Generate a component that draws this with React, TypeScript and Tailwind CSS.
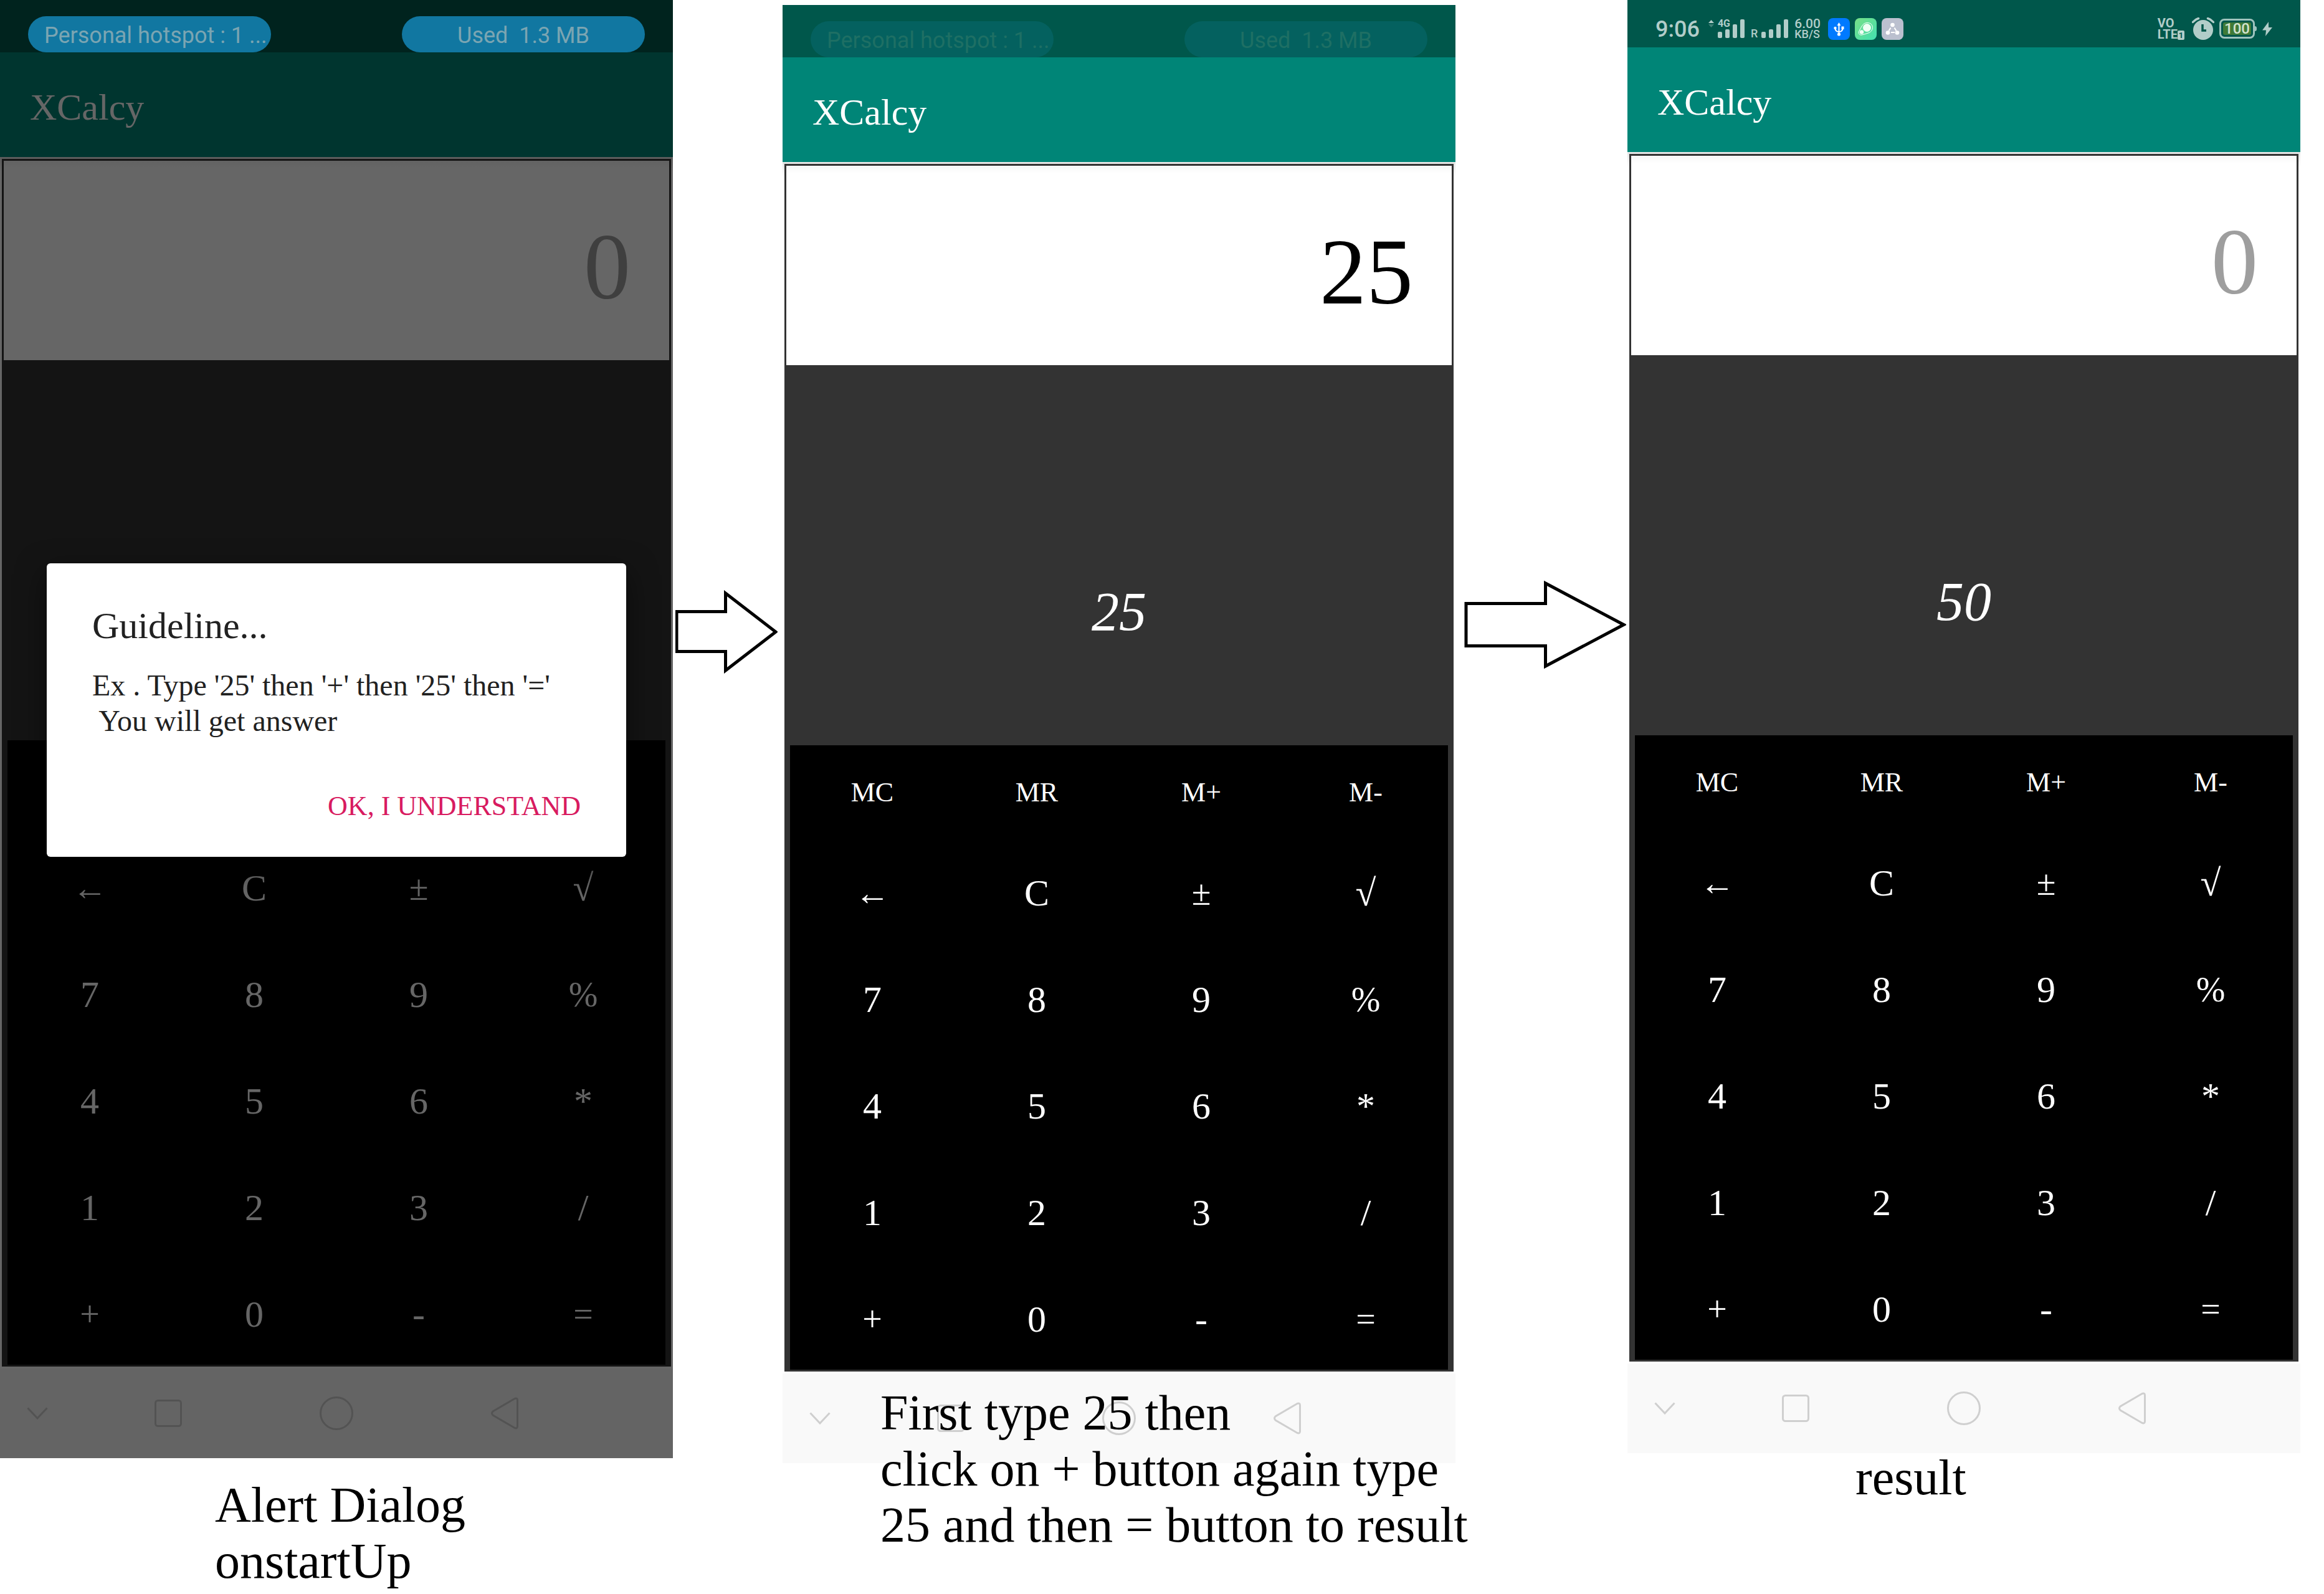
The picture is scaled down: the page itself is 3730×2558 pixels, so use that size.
import React from "react";

type Key = { label: string; name: string; size?: string };

const MEMORY: Key[] = [
  { label: "MC", name: "Memory clear" },
  { label: "MR", name: "Memory recall" },
  { label: "M+", name: "Memory add" },
  { label: "M-", name: "Memory subtract" },
];

const KEYS: Key[] = [
  { label: "←", name: "Backspace", size: "text-[56px]" },
  { label: "C", name: "Clear" },
  { label: "±", name: "Change sign", size: "text-[56px]" },
  { label: "√", name: "Square root" },
  { label: "7", name: "7" },
  { label: "8", name: "8" },
  { label: "9", name: "9" },
  { label: "%", name: "Percent", size: "text-[56px]" },
  { label: "4", name: "4" },
  { label: "5", name: "5" },
  { label: "6", name: "6" },
  { label: "*", name: "Multiply" },
  { label: "1", name: "1" },
  { label: "2", name: "2" },
  { label: "3", name: "3" },
  { label: "/", name: "Divide" },
  { label: "+", name: "Add", size: "text-[56px]" },
  { label: "0", name: "0" },
  { label: "-", name: "Subtract" },
  { label: "=", name: "Equals", size: "text-[56px]" },
];

const SERIF = "font-['Liberation_Serif',serif]";

function Pills({ faded }: { faded?: boolean }) {
  const tone = faded ? "bg-[#04615f] text-[#1e6f64]" : "bg-[#1177a1] text-[#7ba5b2]";
  return (
    <div className="relative z-20 flex h-[84px] items-end justify-between px-[45px] font-['Roboto',sans-serif] text-[36px]">
      <div className={`flex h-[58px] w-[390px] items-center whitespace-pre rounded-full pl-[26px] pt-1 leading-[40px] ${tone}`}>
        Personal hotspot : 1 ...
      </div>
      <div className={`flex h-[58px] w-[390px] items-center justify-center whitespace-pre rounded-full pt-1 leading-[40px] ${tone}`}>
        {"Used  1.3 MB"}
      </div>
    </div>
  );
}

function SignalBars() {
  return (
    <svg width="43" height="30" viewBox="0 0 43 30" fill="currentColor" aria-hidden="true">
      <rect x="0" y="20" width="7" height="10" rx="2" />
      <rect x="12" y="16" width="7" height="14" rx="2" />
      <rect x="24" y="8" width="7" height="22" rx="2" />
      <rect x="36" y="0" width="7" height="30" rx="2" />
    </svg>
  );
}

function StatusIcons() {
  return (
    <div className="flex h-[76px] items-center justify-between px-[45px] pt-4 font-['Roboto',sans-serif] font-medium text-[#b2cdc9]">
      <div className="flex items-center">
        <span className="pt-0.5 text-[36px] leading-[40px]">9:06</span>
        <svg className="ml-3.5 mb-4" width="9" height="12" viewBox="0 0 9 12" aria-hidden="true">
          <path d="M4.5 0 9 5H0z" fill="currentColor" />
          <path d="M4.5 12 0 7h9z" fill="#3f8177" />
        </svg>
        <div className="relative ml-1.5">
          <SignalBars />
          <span className="absolute left-0 top-0 text-[16px] font-bold leading-[13px]">4G</span>
        </div>
        <span className="ml-2.5 mt-4 text-[18px] leading-[16px]">R</span>
        <div className="ml-1.5">
          <SignalBars />
        </div>
        <div className="ml-2.5 flex flex-col">
          <span className="text-[21px] leading-[18px]">6.00</span>
          <span className="text-[18px] leading-[16px]">KB/S</span>
        </div>
        <svg className="ml-3" width="35" height="35" viewBox="0 0 35 35" aria-label="USB">
          <rect width="35" height="35" rx="8" fill="#007aff" />
          <g stroke="#fff" strokeWidth="2" fill="none">
            <path d="M17.500 10V26M11.500 16c0 4 2 6 6 6s6-2 6-6" />
          </g>
          <path d="M17.500 7l3 5h-6z" fill="#fff" />
          <circle cx="17.500" cy="26" r="2.600" fill="#fff" />
          <circle cx="11.500" cy="16" r="2.200" fill="#fff" />
          <rect x="21.500" y="13.500" width="4" height="4.500" fill="#fff" />
        </svg>
        <svg className="ml-2" width="35" height="35" viewBox="0 0 35 35" aria-label="Cleaner">
          <defs>
            <linearGradient id="mint" x1="0" y1="0" x2="1" y2="1">
              <stop offset="0" stopColor="#78e086" />
              <stop offset="1" stopColor="#42dfb1" />
            </linearGradient>
          </defs>
          <rect width="35" height="35" rx="8" fill="url(#mint)" />
          <path
            d="M13 10.500C17 6 26 6.500 28 12.500C29.500 17 27 21.500 23 23.500C19 25 15 26 11.500 27C7 28 5 24 7 20.500C9 17 10.500 13.500 13 10.500Z"
            fill="none"
            stroke="#fff"
            strokeWidth="1"
          />
          <circle cx="19.500" cy="15.500" r="6.500" fill="#f0fff5" />
          <circle cx="11" cy="22.500" r="3.200" fill="#f0fff5" />
        </svg>
        <svg className="ml-2" width="35" height="35" viewBox="0 0 35 35" aria-label="Share">
          <rect width="35" height="35" rx="8" fill="#bbc0cf" />
          <g fill="#fff" stroke="none">
            <circle cx="17.500" cy="11" r="3.300" />
            <circle cx="10" cy="23.500" r="3.300" />
            <circle cx="25" cy="23.500" r="3.300" />
          </g>
          <path d="M14.500 15.500l-3 5M20.500 15.500l3 5M15 23h6" stroke="#fff" strokeWidth="2" />
        </svg>
      </div>
      <div className="flex items-center">
        <div className="flex flex-col font-bold">
          <span className="text-[20px] leading-[17px]">VO</span>
          <span className="flex items-end text-[20px] leading-[18px]">
            LTE
            <span className="h-[15px] w-[11px] rounded-[2px] bg-[#b2cdc9] text-center text-[13px] leading-[15px] text-[#00574b]">1</span>
          </span>
        </div>
        <svg className="ml-3" width="36" height="36" viewBox="0 0 36 36" aria-label="Alarm">
          <circle cx="18" cy="20" r="16" fill="currentColor" />
          <path d="M1.500 7.500C4 4.500 7 2.500 10.500 1.500M34.500 7.500C32 4.500 29 2.500 25.500 1.500" stroke="currentColor" strokeWidth="3.500" strokeLinecap="round" fill="none" />
          <path d="M17 11v10h6" stroke="#00574b" strokeWidth="3.500" fill="none" />
        </svg>
        <div className="ml-2 flex items-center">
          <div className="flex h-8 w-[57px] items-center justify-center rounded-[8px] border-[3px] border-[#9fc3bd]">
            <span className="flex h-[20px] w-[45px] items-center justify-center rounded-[3px] bg-[#3f7a37] text-[24px] leading-[20px] text-[#d3e2cf]">100</span>
          </div>
          <span className="h-2 w-[3px] rounded-r bg-[#9fc3bd]" />
        </div>
        <svg className="ml-[9px]" width="16" height="23" viewBox="0 0 16 23" fill="currentColor" aria-label="Charging">
          <path d="M10 0 0 13.500h6L5 23 16 9H10z" />
        </svg>
      </div>
    </div>
  );
}

function NavBar() {
  const cell = "flex items-center justify-center";
  return (
    <nav className="grid h-36 grid-cols-[120fr_300fr_240fr_300fr_120fr] bg-[#f9f9f9] text-[#cfcfcf]">
      <button className={cell} aria-label="Hide navigation bar">
        <svg width="34" height="20" viewBox="0 0 34 20" fill="none" stroke="currentColor" strokeWidth="3">
          <path d="M1.500 1.500 17 18 32.500 1.500" />
        </svg>
      </button>
      <button className={cell} aria-label="Recent apps">
        <svg width="44" height="44" viewBox="0 0 44 44" fill="none" stroke="currentColor" strokeWidth="3">
          <rect x="1.500" y="1.500" width="41" height="41" rx="4" />
        </svg>
      </button>
      <button className={cell} aria-label="Home">
        <svg width="54" height="54" viewBox="0 0 54 54" fill="none" stroke="currentColor" strokeWidth="3">
          <circle cx="27" cy="27" r="25.500" />
        </svg>
      </button>
      <button className={cell} aria-label="Back">
        <svg width="44" height="52" viewBox="0 0 44 52" fill="none" stroke="currentColor" strokeWidth="3">
          <path d="M38 2.500 3 23Q0 26 3 29L38 49.500Q42.500 51 42.500 47V5Q42.500 1 38 2.500Z" />
        </svg>
      </button>
    </nav>
  );
}

function Phone({
  status,
  value,
  result,
  dialog,
}: {
  status: React.ReactNode;
  value: string;
  result: string;
  dialog?: React.ReactNode;
}) {
  return (
    <section className={`relative bg-[#00574b] ${SERIF}`}>
      {status}
      <header className="flex h-[168px] items-center bg-[#008577] pl-12 pt-2">
        <h1 className="text-[60px] leading-[64px] text-white">XCalcy</h1>
      </header>
      <main className="bg-[linear-gradient(#e6e6e6_3px,#fff_24px)] p-[3px]">
        <div className="bg-[#333333] p-[3px]">
          <input
            aria-label="Number"
            placeholder="0"
            value={value}
            readOnly
            className="block h-80 w-full bg-[linear-gradient(#f7f7f7,#fff_12px)] pr-[62px] pt-5 text-right text-[150px] leading-[180px] text-black outline-none placeholder:text-[#9e9e9e]"
          />
          <output className="block h-[610px] pt-[352px] text-center text-[88px] italic leading-[88px] text-white">
            {result}
          </output>
          <div className="mx-1.5 bg-black text-white">
            <div className={dialog ? "invisible grid grid-cols-4" : "grid grid-cols-4"}>
              {MEMORY.map((k) => (
                <button key={k.label} aria-label={k.name} className="h-[147px] pt-1 text-[44px] leading-[48px]">
                  {k.label}
                </button>
              ))}
            </div>
            <div className="grid grid-cols-4">
              {KEYS.map((k) => (
                <button key={k.label} aria-label={k.name} className="h-[171px] pt-2">
                  <span className={`leading-[60px] ${k.size ?? "text-[60px]"}`}>{k.label}</span>
                </button>
              ))}
            </div>
          </div>
        </div>
      </main>
      <NavBar />
      {dialog}
    </section>
  );
}

function GuidelineDialog() {
  return (
    <div className="absolute inset-0 z-10 flex items-center bg-black/60 px-[75px] pb-[145px] pt-[84px]">
      <div role="dialog" aria-labelledby="guide-title" className="flex w-full flex-col rounded-md bg-white px-[73px] pb-[57px] pt-[70px] text-[#212121] shadow-[0_16px_48px_rgba(0,0,0,0.5)]">
        <h2 id="guide-title" className="text-[60px] leading-[60px]">Guideline...</h2>
        <p className="mt-[37px] whitespace-pre text-[48px] leading-[57px]">{"Ex . Type '25' then '+' then '25' then '='\n You will get answer"}</p>
        <button className="mt-[85px] self-end text-[44px] leading-[48px] text-[#d81b60]">OK, I UNDERSTAND</button>
      </div>
    </div>
  );
}

export default function App() {
  const caption = `relative z-20 whitespace-pre text-[80px] leading-[90px] text-black ${SERIF}`;
  return (
    <div className="grid grid-cols-[minmax(0,1080fr)_minmax(0,176fr)_minmax(0,1080fr)_minmax(0,276fr)_minmax(0,1080fr)_minmax(0,38fr)] items-start overflow-hidden bg-white">
      <figure>
        <Phone status={<Pills />} value="" result="" dialog={<GuidelineDialog />} />
        <figcaption className={`${caption} mt-[30px] pl-[345px]`}>{"Alert Dialog\nonstartUp"}</figcaption>
      </figure>
      <div className="pl-1 pr-2 pt-[947px]">
        <svg className="w-full" viewBox="0 0 164 134" fill="none" stroke="#000" strokeWidth="5" aria-hidden="true">
          <path d="M2 34.500H80.500V5L161 67 80.500 129V98.500H2Z" />
        </svg>
      </div>
      <figure className="pt-2">
        <Phone status={<Pills faded />} value="25" result="25" />
        <figcaption className={`${caption} -mt-[126px] pl-[157px]`}>
          {"First type 25 then\nclick on + button again type\n25 and then = button to result"}
        </figcaption>
      </figure>
      <div className="pl-3.5 pr-0.5 pt-[931px]">
        <svg className="w-full" viewBox="0 0 260 144" fill="none" stroke="#000" strokeWidth="5" aria-hidden="true">
          <path d="M3 37.500H130.500V5L256 71.500 130.500 138V105.500H3Z" />
        </svg>
      </div>
      <figure>
        <Phone status={<StatusIcons />} value="" result="50" />
        <figcaption className={`${caption} -mt-1.5 pl-[366px]`}>result</figcaption>
      </figure>
    </div>
  );
}
